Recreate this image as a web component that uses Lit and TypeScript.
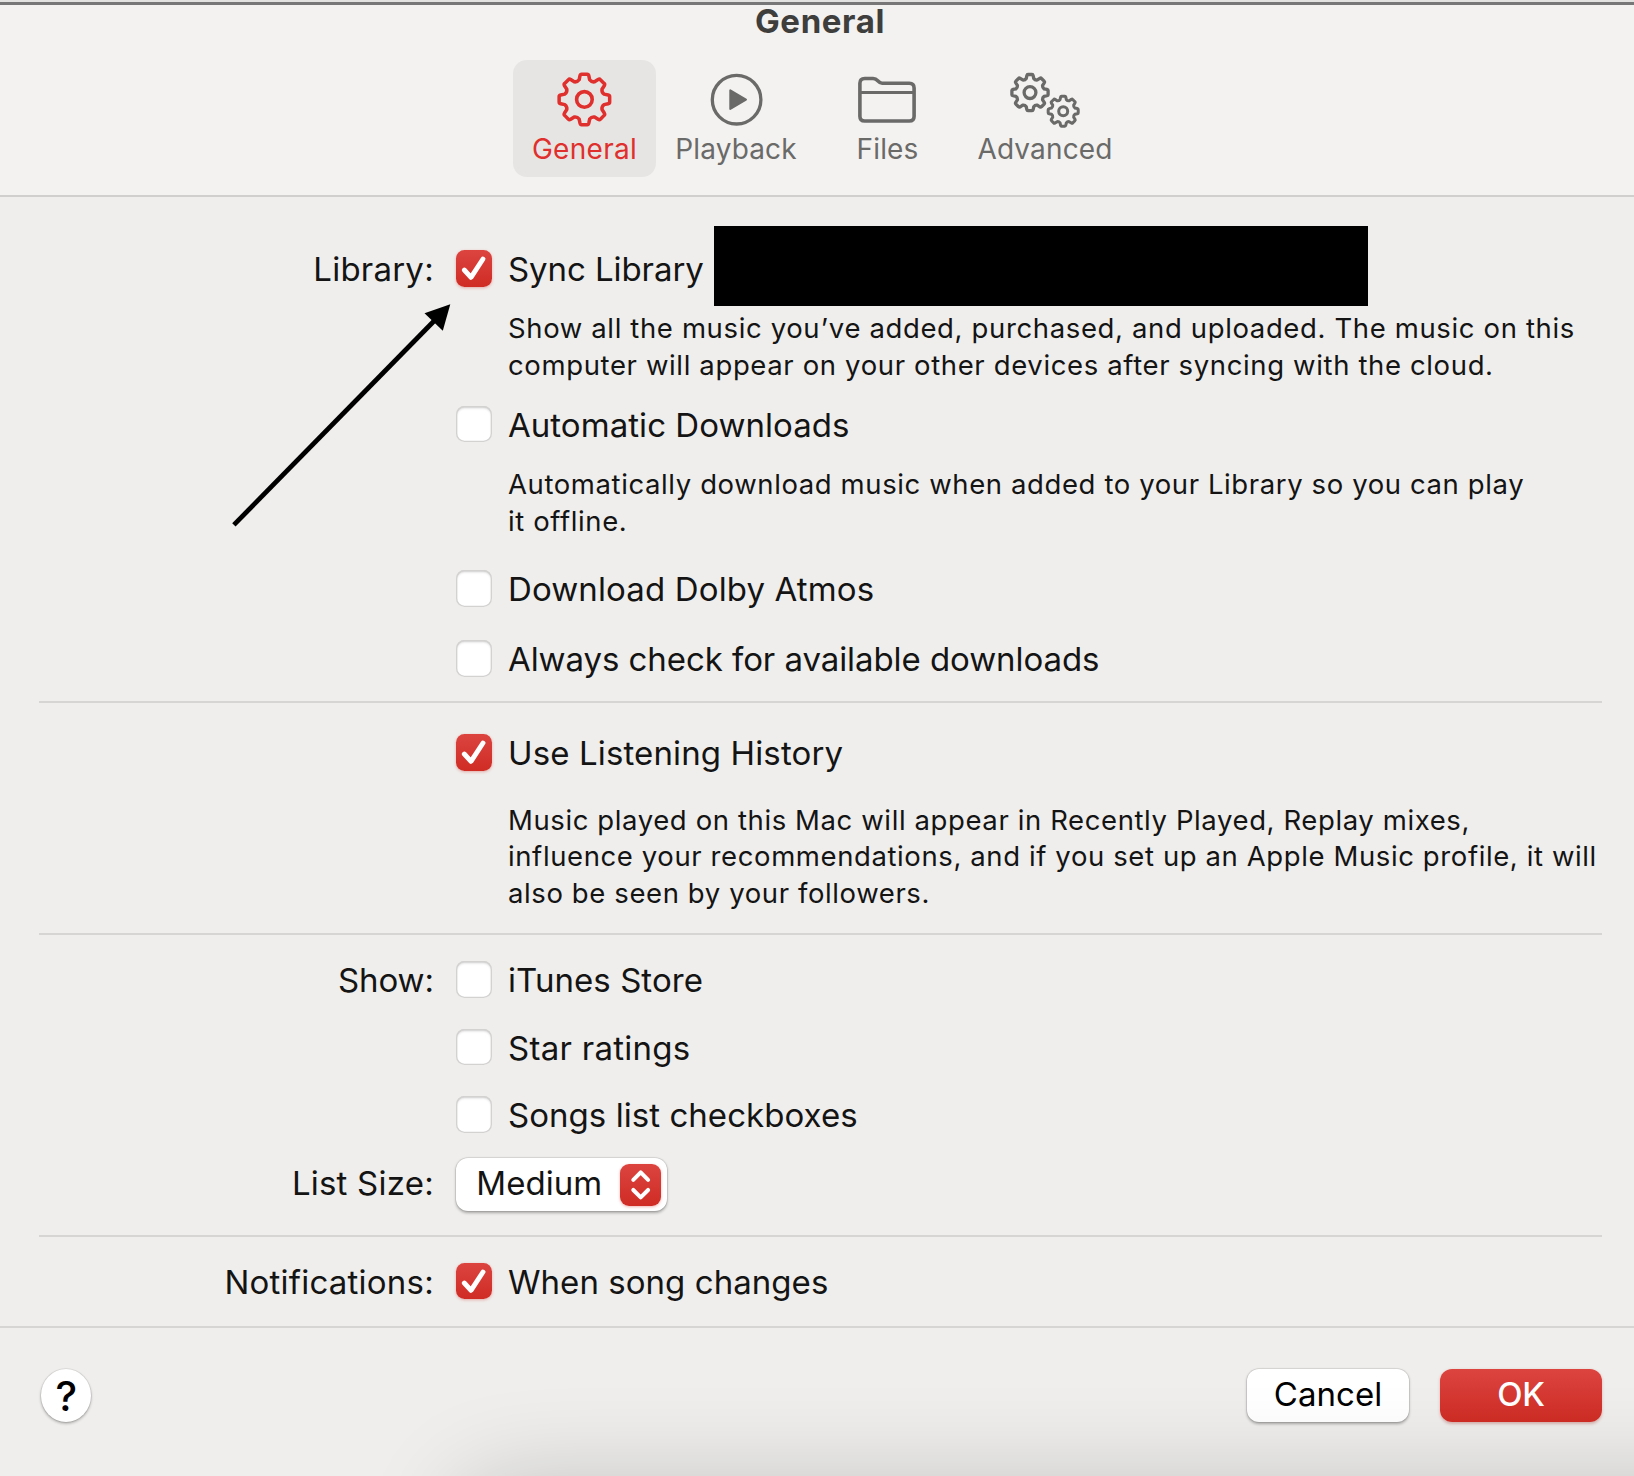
import { LitElement, html, svg, css, nothing } from "lit";
import { customElement, property } from "lit/decorators.js";
import { classMap } from "lit/directives/class-map.js";

/** Outline of an eight-toothed gear around (cx, cy); r is the radius of the tooth tips. */
function gearPath(cx: number, cy: number, r: number): string {
  const at = (radius: number, deg: number) => {
    const a = ((deg - 90) * Math.PI) / 180;
    return `${(cx + radius * Math.cos(a)).toFixed(2)} ${(cy + radius * Math.sin(a)).toFixed(2)}`;
  };
  let d = "";
  for (let i = 0; i < 8; i++) {
    const c = i * 45;
    d += `${i === 0 ? "M" : "L"}${at(r * 0.8, c - 15)}`;
    d += `L${at(r * 0.95, c - 10.5)}Q${at(r * 1.01, c - 9)} ${at(r, c - 6)}`;
    d += `L${at(r, c + 6)}Q${at(r * 1.01, c + 9)} ${at(r * 0.95, c + 10.5)}`;
    d += `L${at(r * 0.8, c + 15)}Q${at(r * 0.73, c + 22.5)} ${at(r * 0.8, c + 30)}`;
  }
  return d + "Z";
}

const icons = {
  general: svg`<svg class="icon" width="58" height="58" viewBox="0 0 58 58">
    <path d=${gearPath(28.4, 29.4, 25.4)} stroke-width="3.5"/><circle cx="28.4" cy="29.4" r="7.8" stroke-width="3.6"/></svg>`,
  playback: svg`<svg class="icon" width="58" height="58" viewBox="0 0 58 58">
    <circle cx="29.6" cy="29.7" r="24.3" stroke-width="3.3"/>
    <path class="solid" d="M23.3 20.3v18.6L39 29.6z" stroke-width="2"/></svg>`,
  files: svg`<svg class="icon" width="60" height="58" viewBox="0 0 60 58">
    <path d="M1.9 13.3Q1.9 8.5 6.7 8.5H15.1C20.1 8.5 19.9 13.3 24.1 13.3H51.3Q56.1 13.3 56.1 18.1V46.2Q56.1 51 51.3 51H6.7Q1.9 51 1.9 46.2Z" stroke-width="3.6"/>
    <path d="M1.9 22.4H56.1" stroke-width="3"/></svg>`,
  advanced: svg`<svg class="icon" width="80" height="58" viewBox="0 0 80 58">
    <path d=${gearPath(25, 22.6, 18.2)} stroke-width="3.3"/><circle cx="25" cy="22.6" r="5.9" stroke-width="3.3"/>
    <path d=${gearPath(58.2, 41.2, 15.1)} stroke-width="3"/><circle cx="58.2" cy="41.2" r="4.5" stroke-width="3"/></svg>`,
};

@customElement("toolbar-tab")
class ToolbarTab extends LitElement {
  @property() icon: keyof typeof icons = "general";
  @property() label = "";
  @property({ type: Boolean }) selected = false;

  static styles = css`
    :host { display: block; }
    .tab {
      box-sizing: border-box; height: 116.5px; padding-top: 9.5px; border-radius: 14px;
      display: flex; flex-direction: column; align-items: center; gap: 4px;
      color: #6a6a69; font-size: 28px; line-height: 34px; letter-spacing: 0.15px;
    }
    .selected { background: #e6e5e4; color: #e0302d; letter-spacing: 0.3px; }
    .icon { display: block; fill: none; stroke: currentColor; stroke-linejoin: round; }
    .solid { fill: currentColor; }
  `;

  render() {
    return html`<div class=${classMap({ tab: true, selected: this.selected })}>
      ${icons[this.icon]}<span>${this.label}</span>
    </div>`;
  }
}

@customElement("check-option")
class CheckOption extends LitElement {
  @property() label = "";
  @property({ type: Boolean }) checked = false;

  static styles = css`
    :host { display: flex; gap: 16px; height: 38px; line-height: 38px; white-space: nowrap; }
    .box {
      flex: none; box-sizing: border-box; width: 36px; height: 36.5px; border-radius: 8.5px; background: #fff;
      box-shadow: inset 0 0 0 1.3px #d3d2d1, inset 0 2px 2.5px rgba(0, 0, 0, 0.2);
    }
    .checked {
      background: linear-gradient(#dc4440, #cf2c24);
      box-shadow: 0 1px 3px rgba(207, 44, 36, 0.35);
    }
    .mark { display: block; fill: none; stroke: #fff; stroke-width: 4.9; stroke-linecap: round; stroke-linejoin: round; }
  `;

  render() {
    return html`<span class=${classMap({ box: true, checked: this.checked })}>
        ${this.checked
          ? html`<svg class="mark" width="36" height="36" viewBox="0 0 36 36"><path d="M8.3 20 15 27.3 27 9"/></svg>`
          : nothing}
      </span><span>${this.label}</span>`;
  }
}

@customElement("app-root")
class AppRoot extends LitElement {
  static styles = css`
    :host {
      display: block; position: relative; overflow: hidden; height: 1476px; background: #efeeec;
      color: #141414; font: 400 33px Inter, "Liberation Sans", sans-serif; letter-spacing: 0.05px;
    }
    .header {
      box-sizing: border-box; height: 197px; background: #f3f2f0;
      border-top: 2px solid #e2e3e0; border-bottom: 2px solid #d0cfcd;
    }
    .edge { height: 2.6px; background: #767776; }
    .title {
      margin: 0; padding-left: 6px; text-align: center; color: #3e3e3d;
      font-size: 33px; font-weight: 700; line-height: 32.4px; letter-spacing: 0.62px;
    }
    .tabs { display: grid; grid-template-columns: 143px 160px 143px 172px; justify-content: center; padding: 23px 0 0 10px; }
    .section { box-sizing: border-box; display: flex; flex-direction: column; margin: 0 32.5px 0 38.7px; border-bottom: 2px solid #d6d5d3; }
    .library { height: 506px; padding-top: 53px; }
    .history { height: 231.5px; padding-top: 31.3px; }
    .show { height: 302px; padding-top: 26.5px; }
    .notify { height: 89.5px; padding-top: 26.3px; margin: 0; padding-left: 38.7px; border: 0; }
    .row { display: grid; grid-template-columns: 395.2px auto; column-gap: 22.1px; justify-content: start; }
    .label { text-align: right; line-height: 38px; letter-spacing: 0.22px; white-space: nowrap; }
    .snug { letter-spacing: -0.1px; }
    .note {
      margin: 0 0 0 469.3px; font-size: 27.5px; line-height: 36.6px; letter-spacing: 0.635px; white-space: nowrap;
    }
    .dense { letter-spacing: 0.605px; }
    .wide { letter-spacing: 0.13px; }
    .wider { letter-spacing: 0.27px; }
    .tight { letter-spacing: -0.07px; }
    .after-22 { margin-top: 22.2px; }
    .after-23 { margin-top: 22.6px; }
    .after-24 { margin-top: 24.3px; }
    .after-29 { margin-top: 29.6px; }
    .after-31 { margin-top: 31px; }
    .after-32 { margin-top: 32px; }
    .select {
      box-sizing: border-box; width: 211px; height: 52.4px; padding: 0 5.7px 0 20.4px; border-radius: 12px; background: #fff;
      display: flex; justify-content: space-between; line-height: 50px;
      box-shadow: 0 0 0 0.8px rgba(0, 0, 0, 0.09), 0 1.5px 3px rgba(0, 0, 0, 0.3);
    }
    .tall { line-height: 50px; }
    .stepper {
      margin-top: 5.5px; width: 41.4px; height: 41.6px; border-radius: 9px; background: linear-gradient(#dc4440, #cf2c24);
      box-shadow: 0 1px 3px rgba(207, 44, 36, 0.35);
    }
    .chevrons { display: block; fill: none; stroke: #fff; stroke-width: 4; stroke-linecap: round; stroke-linejoin: round; }
    .footer {
      box-sizing: border-box; height: 150px; padding: 41.4px 32px 0 40.6px; border-top: 2px solid #d6d5d3;
      display: flex; align-items: flex-start; gap: 31px;
    }
    .button {
      width: 162px; height: 52.4px; border-radius: 12px; text-align: center; line-height: 50.6px; background: #fff; color: #000;
      box-shadow: 0 0 0 0.8px rgba(0, 0, 0, 0.09), 0 1.5px 3px rgba(0, 0, 0, 0.3);
    }
    .primary {
      background: linear-gradient(#dc4440, #cf2c24); color: #fff; font-weight: 500; letter-spacing: -0.3px;
      box-shadow: 0 1.5px 3px rgba(160, 40, 30, 0.3);
    }
    .help {
      width: 50.4px; height: 53px; margin-right: auto; border-radius: 50%; background: #fff; color: #000; text-align: center;
      font-size: 41px; font-weight: 450; line-height: 54px; text-indent: 1px;
      box-shadow: 0 0 0 0.8px rgba(0, 0, 0, 0.08), 0 1.5px 3px rgba(0, 0, 0, 0.3);
    }
    .redaction { position: absolute; left: 714px; top: 226px; width: 654px; height: 80px; background: #000; }
    .arrow { position: absolute; left: 220px; top: 290px; }
    .shade { position: absolute; left: 470px; right: -200px; top: 1495px; height: 100px; border-radius: 30px; box-shadow: 0 0 100px 10px rgba(0, 0, 0, 0.2); }
  `;

  render() {
    return html`
      <header class="header">
        <div class="edge"></div>
        <h1 class="title">General</h1>
        <nav class="tabs">
          <toolbar-tab icon="general" label="General" selected></toolbar-tab>
          <toolbar-tab icon="playback" label="Playback"></toolbar-tab>
          <toolbar-tab icon="files" label="Files"></toolbar-tab>
          <toolbar-tab icon="advanced" label="Advanced"></toolbar-tab>
        </nav>
      </header>

      <section class="section library">
        <div class="row"><span class="label">Library:</span><check-option class="tight" label="Sync Library" checked></check-option></div>
        <p class="note after-22">Show all the music you’ve added, purchased, and uploaded. The music on this<br />computer will appear on your other devices after syncing with the cloud.</p>
        <div class="row after-23"><span></span><check-option label="Automatic Downloads"></check-option></div>
        <p class="note dense after-22">Automatically download music when added to your Library so you can play<br />it offline.</p>
        <div class="row after-31"><span></span><check-option class="wide" label="Download Dolby Atmos"></check-option></div>
        <div class="row after-32"><span></span><check-option class="tight" label="Always check for available downloads"></check-option></div>
      </section>

      <section class="section history">
        <div class="row"><span></span><check-option class="wide" label="Use Listening History" checked></check-option></div>
        <p class="note dense after-29">Music played on this Mac will appear in Recently Played, Replay mixes,<br />influence your recommendations, and if you set up an Apple Music profile, it will<br />also be seen by your followers.</p>
      </section>

      <section class="section show">
        <div class="row"><span class="label snug">Show:</span><check-option label="iTunes Store"></check-option></div>
        <div class="row after-29"><span></span><check-option class="wider" label="Star ratings"></check-option></div>
        <div class="row after-29"><span></span><check-option label="Songs list checkboxes"></check-option></div>
        <div class="row after-24">
          <span class="label tall">List Size:</span>
          <div class="select">
            <span>Medium</span>
            <span class="stepper"><svg class="chevrons" width="41.4" height="41.6" viewBox="0 0 41.4 41.6"><path d="M13.3 15.8 20.7 8.4 28.1 15.8M13.3 26 20.7 33.4 28.1 26"/></svg></span>
          </div>
        </div>
      </section>

      <section class="section notify">
        <div class="row"><span class="label">Notifications:</span><check-option label="When song changes" checked></check-option></div>
      </section>

      <footer class="footer">
        <div class="help">?</div>
        <div class="button">Cancel</div>
        <div class="button primary">OK</div>
      </footer>

      <div class="redaction"></div>
      <svg class="arrow" width="240" height="245" viewBox="220 290 240 245">
        <path d="M233.9 524.9 436 319" stroke="#000" stroke-width="4.8" />
        <path d="M450.3 304.3 424.5 313.3 442.8 330.7Z" />
      </svg>
      <div class="shade"></div>
    `;
  }
}
